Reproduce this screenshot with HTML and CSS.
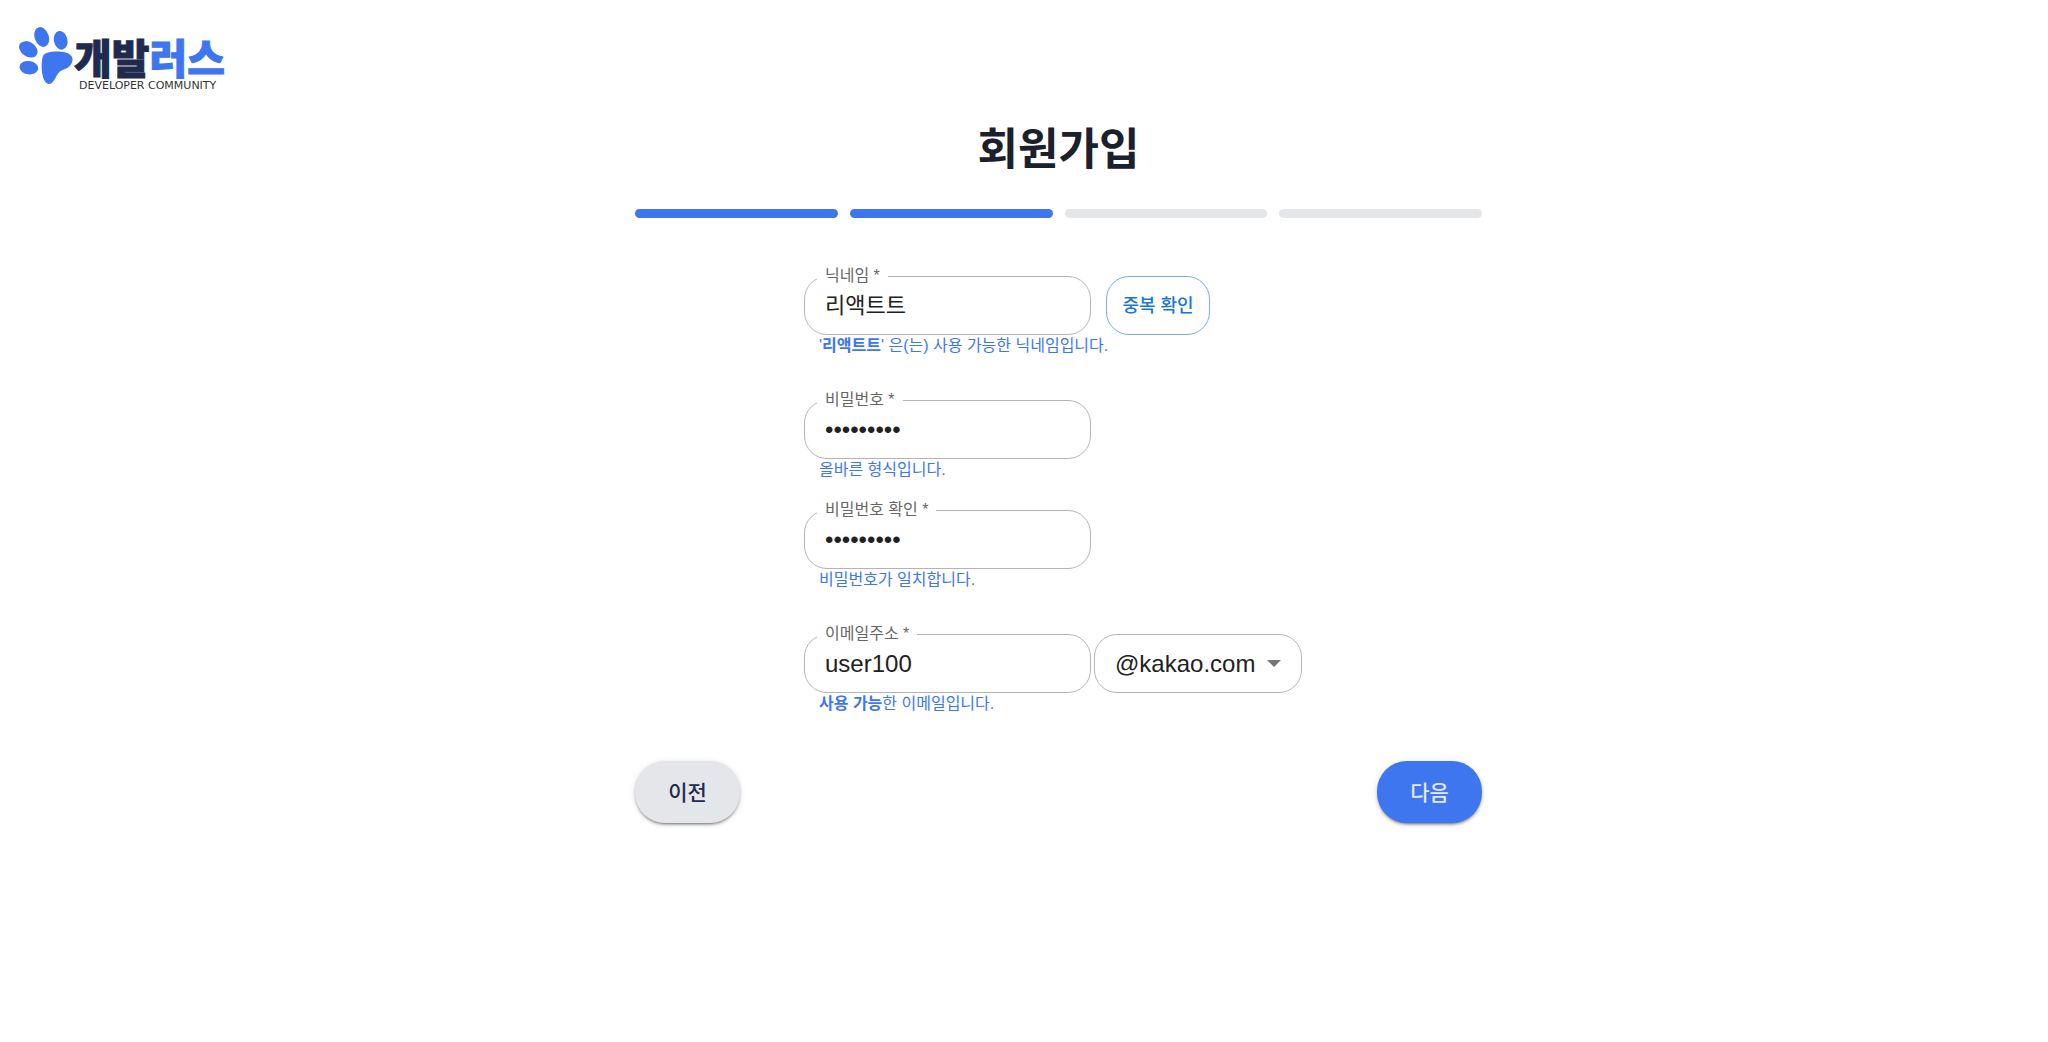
FILE: index.html
```html
<!DOCTYPE html>
<html lang="ko">
<head>
<meta charset="utf-8">
<meta name="viewport" content="width=device-width, initial-scale=1">
<title>회원가입</title>
<link rel="stylesheet" href="styles.css">
</head>
<body>
<header class="header">
  <a class="logo" href="#">
    <svg class="logo-paw" viewBox="0 0 55 58" aria-hidden="true">
      <ellipse cx="22.700" cy="10" rx="7" ry="10.200" transform="rotate(-20 22.700 10)"/>
      <ellipse cx="41.700" cy="13.300" rx="6.800" ry="9.500" transform="rotate(-12 41.700 13.300)"/>
      <ellipse cx="9.300" cy="22.300" rx="10" ry="7.200" transform="rotate(34 9.300 22.300)"/>
      <ellipse cx="9.900" cy="40.700" rx="9.400" ry="6.700" transform="rotate(8 9.900 40.700)"/>
      <path d="M24 29C26 25.500 31 24.500 38 24.500C46 24 53.500 27 53.500 32C53.500 38 49 41.500 43.500 43C38.500 45 37.500 50 34.500 54C32 57.500 28.500 58 26 54.500C22 49 22 34 24 29Z"/>
    </svg>
    <span class="logo-text">
      <span class="logo-name">개발<span class="logo-accent">러스</span></span>
      <span class="logo-tagline">Developer Community</span>
    </span>
  </a>
</header>
<main class="signup">
  <h1 class="title">회원가입</h1>
  <div class="steps" role="img" aria-label="2 / 4">
    <span class="step step-done"></span>
    <span class="step step-done"></span>
    <span class="step"></span>
    <span class="step"></span>
  </div>
  <form class="form">
    <div class="fields">
      <div class="group group-wide">
        <div class="row">
          <div class="field">
            <label class="label" for="nickname">닉네임 *</label>
            <input class="control control-korean" id="nickname" type="text" value="리액트트">
          </div>
          <button class="check" type="button">중복 확인</button>
        </div>
        <p class="helper">'<b>리액트트</b>' 은(는) 사용 가능한 닉네임입니다.</p>
      </div>
      <div class="group">
        <div class="row">
          <div class="field">
            <label class="label" for="password">비밀번호 *</label>
            <input class="control" id="password" type="password" value="password1">
          </div>
        </div>
        <p class="helper">올바른 형식입니다.</p>
      </div>
      <div class="group group-wide">
        <div class="row">
          <div class="field">
            <label class="label" for="confirm">비밀번호 확인 *</label>
            <input class="control" id="confirm" type="password" value="password1">
          </div>
        </div>
        <p class="helper">비밀번호가 일치합니다.</p>
      </div>
      <div class="group">
        <div class="row row-email">
          <div class="field">
            <label class="label" for="email">이메일주소 *</label>
            <input class="control" id="email" type="text" value="user100">
          </div>
          <div class="select-wrap">
            <select class="control select" aria-label="이메일 도메인">
              <option>@kakao.com</option>
            </select>
            <svg class="arrow" viewBox="0 0 14 7" aria-hidden="true"><path d="M0 0H14L7 7Z"/></svg>
          </div>
        </div>
        <p class="helper"><b>사용 가능</b>한 이메일입니다.</p>
      </div>
    </div>
    <div class="actions">
      <button class="nav-button" type="button">이전</button>
      <button class="nav-button nav-next" type="submit">다음</button>
    </div>
  </form>
</main>
</body>
</html>
```
FILE: styles.css
```css
* {
  box-sizing: border-box;
}

body {
  margin: 0;
  background: #fff;
  color: #212121;
  font-family: "Liberation Sans", "Noto Sans CJK KR", sans-serif;
}

button,
input,
select {
  font-family: inherit;
}

.header {
  display: flex;
  padding: 27px 19px 0;
}

.logo {
  display: flex;
  height: 62px;
  color: #1e2b4f;
  text-decoration: none;
}

.logo-paw {
  width: 55px;
  height: 58px;
  fill: #3d76ef;
}

.logo-text {
  display: flex;
  flex-direction: column;
  gap: 6px;
  padding-top: 11px;
}

.logo-name {
  font-family: "Noto Sans CJK KR", sans-serif;
  font-size: 41px;
  font-weight: 900;
  line-height: 36px;
  -webkit-text-stroke: 1px currentColor;
}

.logo-accent {
  color: #3d76ef;
}

.logo-tagline {
  padding-left: 5px;
  color: #333;
  font-family: "DejaVu Sans", sans-serif;
  font-size: 11px;
  line-height: 12px;
  text-transform: uppercase;
  white-space: nowrap;
}

.signup {
  width: min(100%, 916px);
  margin: 0 auto;
  padding: 0 0 40px 69px;
}

@media (min-width: 1000px) {
  .signup {
    margin: 0 0 0 calc(50% - 458px);
  }
}

.title {
  margin: 0;
  padding: 29px 0 27px;
  color: #1a202c;
  font-size: 44px;
  font-weight: 700;
  line-height: 64px;
  text-align: center;
}

.steps {
  display: grid;
  grid-template-columns: repeat(4, 1fr);
  gap: 12px;
}

.step {
  height: 9px;
  border-radius: 5px;
  background: #e5e6ea;
}

.step-done {
  background: #3d76ef;
}

.fields {
  width: min(100%, 509px);
  margin: 58px auto 0;
}

.group {
  padding-bottom: 30px;
}

.group-wide {
  padding-bottom: 44px;
}

.row {
  display: flex;
  gap: 15px;
}

.row-email {
  gap: 3px;
}

.field {
  position: relative;
  width: 287px;
}

.label {
  position: absolute;
  top: -12px;
  left: 13px;
  padding: 0 8px;
  background: #fff;
  color: #666;
  font-size: 16px;
  line-height: 24px;
}

.control {
  display: block;
  width: 100%;
  height: 59px;
  padding: 0 20px;
  border: 1px solid #b4b4b4;
  border-radius: 23px;
  background: #fff;
  color: #212121;
  font-size: 24px;
}

.control-korean {
  padding-bottom: 5px;
  font-size: 22px;
}

.select-wrap {
  position: relative;
  width: 208px;
}

.select {
  appearance: none;
}

.arrow {
  position: absolute;
  top: 26px;
  right: 21px;
  width: 14px;
  height: 7px;
  fill: #757575;
  pointer-events: none;
}

.check {
  width: 104px;
  padding: 0 0 4px;
  border: 1px solid #75ade4;
  border-radius: 23px;
  background: #fff;
  color: #1976d2;
  font-size: 18px;
  font-weight: 500;
}

.helper {
  margin: 0;
  padding-left: 15px;
  color: #3d76ef;
  font-size: 16px;
  line-height: 21px;
}

.actions {
  display: flex;
  justify-content: space-between;
  padding-top: 17px;
}

.nav-button {
  width: 105px;
  height: 62px;
  padding: 0 0 3px;
  border: 0;
  border-radius: 30px;
  background: #e5e6ea;
  box-shadow: 0 3px 2px -2px rgba(0, 0, 0, 0.3), 0 2px 3px rgba(0, 0, 0, 0.2), 0 1px 6px rgba(0, 0, 0, 0.12);
  color: #1e2b4f;
  font-size: 21px;
  font-weight: 500;
}

.nav-next {
  background: #3d76ef;
  color: #e5e6ea;
}
```
